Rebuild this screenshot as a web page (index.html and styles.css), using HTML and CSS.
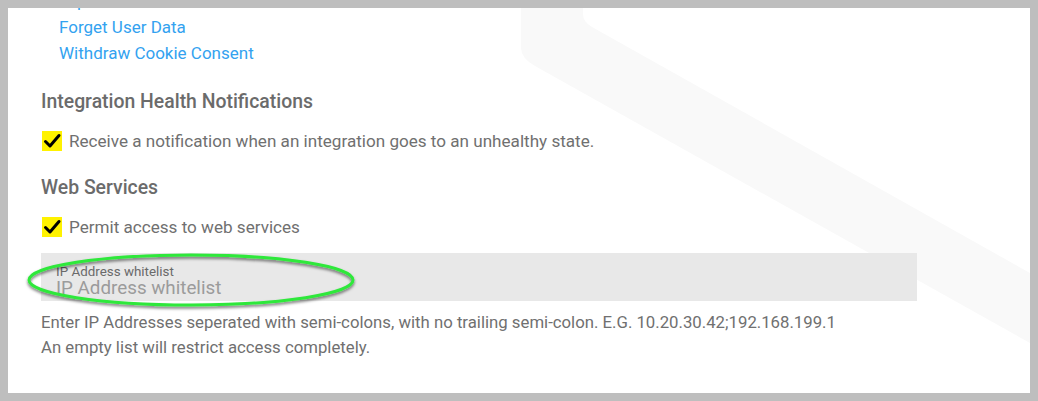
FILE: index.html
```html
<!DOCTYPE html>
<html>
<head>
<meta charset="utf-8">
<link rel="stylesheet" href="styles.css">
</head>
<body>
<div class="frame">
  <div class="card">
    <svg class="bg-band" width="1022" height="385" viewBox="0 0 1022 385" aria-hidden="true">
      <path d="M513,0 L575,0 L575,6 Q575,14 584,19 L1022,265 L1022,335 L527,58 Q513,50 513,40 Z" fill="#f9f9f9"/>
    </svg>
    <div class="content">
      <ul class="links">
        <li><a href="#">Export User Data</a></li>
        <li><a href="#">Forget User Data</a></li>
        <li><a href="#">Withdraw Cookie Consent</a></li>
      </ul>

      <h2 class="section-title first">Integration Health Notifications</h2>
      <label class="check-row">
        <span class="checkbox">
          <svg width="20" height="20" viewBox="0 0 20 20"><path d="M3.5 10.5 L8 15 L17 4.5" fill="none" stroke="#000" stroke-width="3" stroke-linecap="round" stroke-linejoin="round"/></svg>
        </span>
        <span class="check-text">Receive a notification when an integration goes to an unhealthy state.</span>
      </label>

      <h2 class="section-title">Web Services</h2>
      <label class="check-row">
        <span class="checkbox">
          <svg width="20" height="20" viewBox="0 0 20 20"><path d="M3.5 10.5 L8 15 L17 4.5" fill="none" stroke="#000" stroke-width="3" stroke-linecap="round" stroke-linejoin="round"/></svg>
        </span>
        <span class="check-text">Permit access to web services</span>
      </label>

      <div class="field">
        <div class="field-label">IP Address whitelist</div>
        <div class="field-input">IP Address whitelist</div>
        <svg class="highlight" width="340" height="64" viewBox="0 0 340 64" aria-hidden="true">
          <defs>
            <filter id="sh" x="-10%" y="-30%" width="120%" height="160%">
              <feDropShadow dx="0" dy="2" stdDeviation="1.5" flood-color="#000" flood-opacity="0.55"/>
            </filter>
          </defs>
          <ellipse cx="170" cy="30" rx="162" ry="25" fill="none" stroke="#2ee83a" stroke-width="3" filter="url(#sh)"/>
        </svg>
      </div>

      <p class="help">Enter IP Addresses seperated with semi-colons, with no trailing semi-colon. E.G. 10.20.30.42;192.168.199.1</p>
      <p class="help">An empty list will restrict access completely.</p>
    </div>
  </div>
</div>
</body>
</html>
```

FILE: styles.css
```css
html, body {
  margin: 0;
  padding: 0;
}
body {
  background: #bebebe;
  font-family: Roboto, "Liberation Sans", sans-serif;
  width: 1038px;
  height: 401px;
  overflow: hidden;
}
.frame {
  padding: 8px;
}
.card {
  position: relative;
  background: #ffffff;
  height: 385px;
  overflow: hidden;
}
.bg-band {
  position: absolute;
  left: 0;
  top: 0;
}
.content {
  position: relative;
  padding-left: 33px;
  margin-top: -20px;
}
.links {
  list-style: none;
  margin: 0;
  padding: 0 0 0 18px;
}
.links li {
  height: 26px;
  line-height: 26px;
  font-size: 17px;
}
.links a {
  color: #33a2f0;
  text-decoration: none;
}
.section-title {
  margin: 22px 0 0 0;
  font-size: 19.4px;
  line-height: 24px;
  font-weight: 500;
  color: #6b6b6b;
}
.section-title.first {
  margin-top: 24px;
}
.check-row {
  display: flex;
  align-items: center;
  gap: 7px;
  margin-top: 14px;
  height: 26px;
}
.checkbox {
  width: 20px;
  height: 20px;
  background: #fff200;
  display: flex;
  margin-left: 1px;
}
.check-text {
  font-size: 17.1px;
  color: #707070;
  line-height: 26px;
}
.field {
  position: relative;
  margin-top: 13px;
  width: 876px;
  height: 48px;
  box-sizing: border-box;
  background: #e8e8e8;
  padding: 12px 0 0 15px;
}
.field-label {
  font-size: 13.4px;
  line-height: 13px;
  color: #6a6a6a;
}
.field-input {
  font-size: 18.8px;
  line-height: 20px;
  color: #9b9b9b;
}
.highlight {
  position: absolute;
  left: -20px;
  top: -3px;
}
.help {
  margin: 0;
  font-size: 16.75px;
  line-height: 25px;
  color: #707070;
}
.field + .help {
  margin-top: 9px;
}
```
